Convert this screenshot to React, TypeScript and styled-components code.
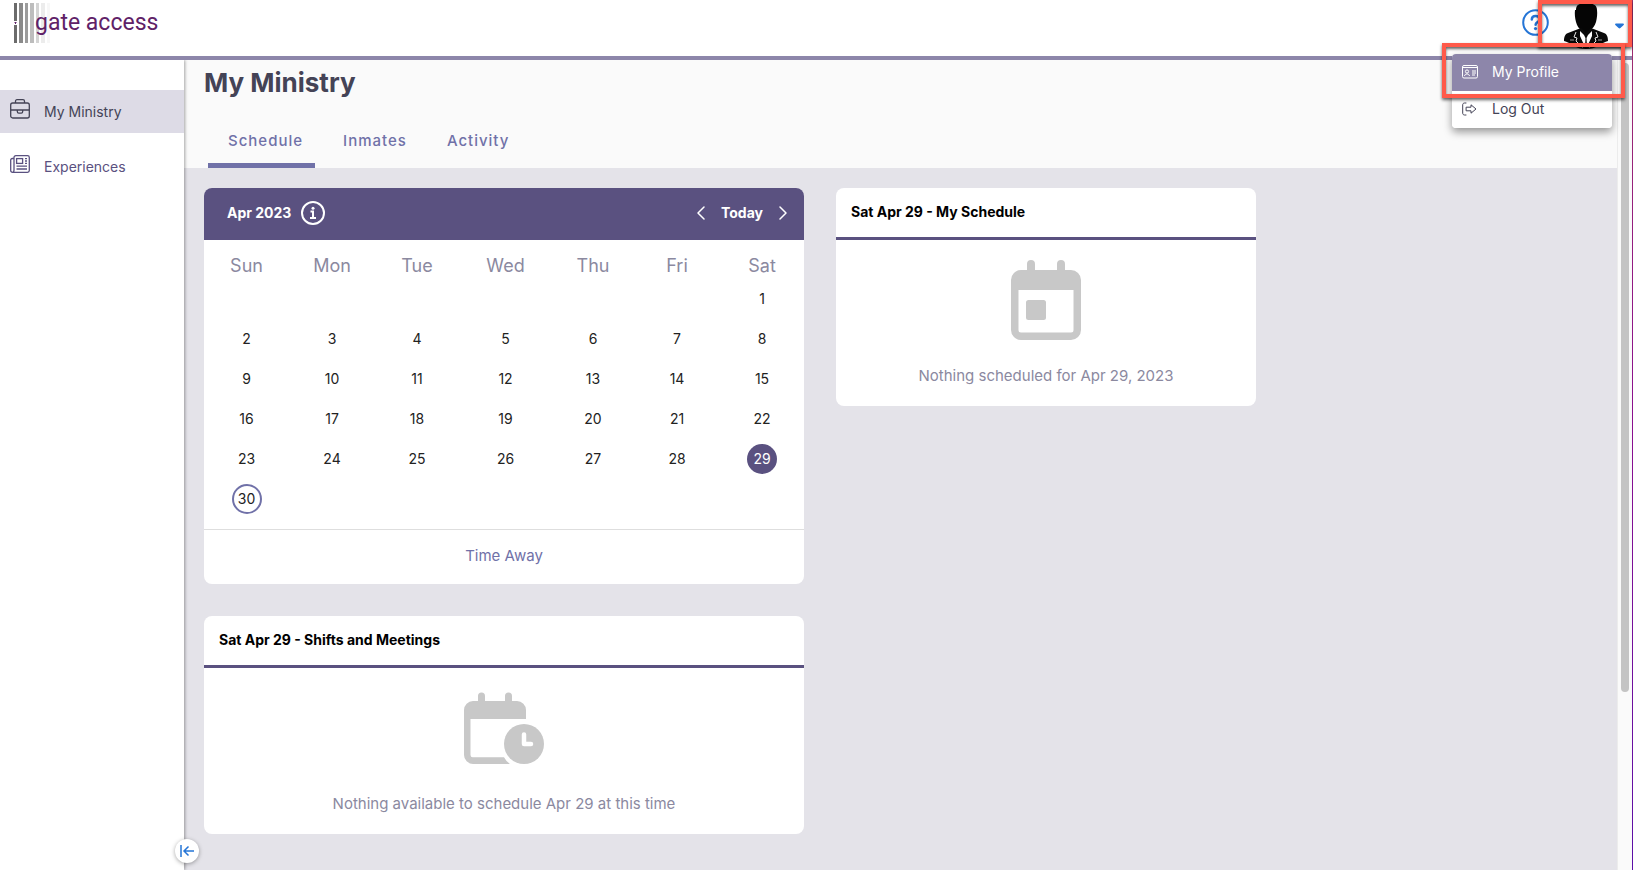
import React from "react";
import styled, { createGlobalStyle, css } from "styled-components";

const color = {
  plum: "#5a5180",
  lilac: "#8d86aa",
  violet: "#7071a8",
  link: "#2575d6",
  ink: "#444356",
  muted: "#8b899f",
  canvas: "#e4e3e9",
  panel: "#fafafa",
  selected: "#dddbe6",
  placeholder: "#c8c8c8",
  highlight: "#ff5a4a",
};

const GlobalStyle = createGlobalStyle`
  *, *::before, *::after { box-sizing: border-box; }
  body {
    margin: 0;
    background: #fff;
    color: ${color.ink};
    font: 14px/20px Inter, "Open Sans", sans-serif;
  }
  button { font: inherit; color: inherit; background: none; border: 0; padding: 0; cursor: pointer; }
  a { color: inherit; text-decoration: none; }
  svg { display: block; flex: none; }
`;

const Page = styled.div`
  position: relative;
  display: flex;
  flex-direction: column;
  min-height: 100vh;
  padding-right: 1px;
  background: linear-gradient(#a0306c, #8a1090 50%, #5c10a8) right / 1px 100% no-repeat;
`;

const TopBar = styled.header`
  position: relative;
  display: flex;
  align-items: flex-start;
  justify-content: space-between;
  height: 60px;
  padding: 3px 8px 0 14px;
  background: #fff;
  border-bottom: 4px solid ${color.lilac};
`;

const Logo = styled.a`
  display: flex;
  align-items: center;
  height: 40px;
`;

const LogoText = styled.span`
  margin-left: -15px;
  color: #5f2167;
  font: 23px/38px Roboto, sans-serif;
`;

const Tools = styled.div`
  display: flex;
  align-items: flex-start;
  gap: 14px;
`;

const HelpButton = styled.button`
  margin-top: 6px;
  color: ${color.link};
`;

const AccountButton = styled.button`
  display: flex;
  align-items: center;
  gap: 6px;
  color: ${color.link};
`;

const Menu = styled.div`
  position: absolute;
  z-index: 2;
  top: 54px;
  right: 20px;
  width: 160px;
  overflow: hidden;
  background: #fff;
  border-radius: 4px;
  box-shadow: 0 4px 8px rgba(0, 0, 0, 0.4);
`;

const MenuItem = styled.a<{ $active?: boolean }>`
  display: flex;
  align-items: center;
  gap: 14px;
  height: 37px;
  padding: 0 10px 2px;
  color: ${(p) => (p.$active ? "#fff" : color.ink)};
  background: ${(p) => (p.$active ? color.lilac : "#fff")};
`;

const callout = css`
  position: absolute;
  z-index: 3;
  border: 4px solid ${color.highlight};
  box-shadow: 0 2px 3px rgba(0, 0, 0, 0.6), inset 0 2px 3px rgba(0, 0, 0, 0.6);
  pointer-events: none;
`;

const AccountCallout = styled.div`
  ${callout}
  top: 0;
  right: 0;
  width: 94px;
  height: 47px;
`;

const ProfileCallout = styled.div`
  ${callout}
  top: 43px;
  right: 7px;
  width: 183px;
  height: 55px;
`;

const Body = styled.div`
  display: flex;
  flex: 1;
`;

const Sidebar = styled.nav`
  position: relative;
  z-index: 1;
  display: flex;
  flex: none;
  flex-direction: column;
  gap: 12px;
  width: 184px;
  padding-top: 30px;
  background: #fff;
  box-shadow: 1px 0 3px rgba(0, 0, 0, 0.35);
  clip-path: inset(0 -20px 0 0);
`;

const NavItem = styled.a<{ $active?: boolean }>`
  display: flex;
  align-items: center;
  gap: 14px;
  height: 43px;
  padding-left: 10px;
  color: ${(p) => (p.$active ? color.ink : color.plum)};
  background: ${(p) => (p.$active ? color.selected : "transparent")};

  svg { margin-bottom: 5px; }
`;

const CollapseButton = styled.button`
  position: absolute;
  right: -15px;
  bottom: 7px;
  display: grid;
  place-items: center;
  width: 24px;
  height: 24px;
  color: ${color.link};
  background: #fff;
  border-radius: 50%;
  box-shadow: 0 1px 4px rgba(0, 0, 0, 0.35);
`;

const Main = styled.main`
  flex: 1;
  min-width: 0;
  background: ${color.canvas};
`;

const PageHead = styled.div`
  padding: 7px 20px 0;
  background: ${color.panel};
`;

const Title = styled.h1`
  margin: 0 0 22px;
  font-size: 26px;
  line-height: 32px;
  font-weight: 700;
`;

const Tabs = styled.div`
  display: flex;
  gap: 8px;
  padding-left: 4px;
`;

const Tab = styled.button<{ $active?: boolean }>`
  padding: 10px 12px 12px 20px;
  color: ${color.violet};
  font-size: 15px;
  font-weight: 500;
  letter-spacing: 1px;
  border-bottom: 5px solid ${(p) => (p.$active ? color.violet : "transparent")};
`;

const Board = styled.div`
  display: grid;
  grid-template-columns: minmax(0, 600px) minmax(0, 420px);
  gap: 32px;
  padding: 20px;
`;

const Column = styled.div`
  display: flex;
  flex-direction: column;
  gap: 32px;
`;

const Card = styled.section`
  overflow: hidden;
  background: #fff;
  border-radius: 8px;
`;

const CardTitle = styled.h2`
  margin: 0;
  padding: 0 15px 2px;
  color: #000;
  font-size: 14px;
  line-height: 47px;
  font-weight: 700;
  border-bottom: 3px solid ${color.plum};
`;

const EmptyState = styled.div`
  display: flex;
  flex-direction: column;
  align-items: center;
  gap: 24px;
  padding: 20px 16px 18px;
  color: ${color.muted};
  font-size: 15px;
  line-height: 24px;
`;

const CalendarBar = styled.div`
  display: flex;
  align-items: center;
  justify-content: space-between;
  height: 52px;
  padding: 0 17px 2px 23px;
  color: #fff;
  font-weight: 700;
  background: ${color.plum};
`;

const BarGroup = styled.div<{ $gap: number }>`
  display: flex;
  align-items: center;
  gap: ${(p) => p.$gap}px;
`;

const MonthTable = styled.table`
  width: 100%;
  margin: 12px 0 10px;
  table-layout: fixed;
  border-collapse: collapse;

  th, td { padding: 0; text-align: center; }
  th { height: 27px; color: ${color.muted}; font-size: 18px; font-weight: 400; }
  td { height: 40px; color: #222; }
  th:nth-child(1) { width: 85px; }
  th:nth-child(2), th:nth-child(6) { width: 86px; }
  th:nth-child(3) { width: 84px; }
  th:nth-child(4) { width: 93px; }
  th:nth-child(5) { width: 82px; }
`;

const Day = styled.button<{ $selected?: boolean; $today?: boolean }>`
  width: 30px;
  height: 30px;
  border-radius: 50%;
  ${(p) => p.$selected && css`color: #fff; background: ${color.plum};`}
  ${(p) => p.$today && css`border: 2px solid ${color.violet};`}
`;

const CardFooter = styled.div`
  padding-bottom: 2px;
  color: ${color.violet};
  font-size: 15px;
  line-height: 52px;
  text-align: center;
  border-top: 1px solid #dedede;
`;

const ScrollTrack = styled.div`
  flex: none;
  width: 15px;
  padding: 3px 3px 0;
  background: ${color.panel};
  border-left: 1px solid #ececec;
`;

const ScrollThumb = styled.div`
  width: 8px;
  height: 78%;
  background: #c4c4c4;
  border-radius: 4px;
`;

const Barcode = () => (
  <svg width="36" height="40" viewBox="0 0 36 40">
    <rect width="3" height="40" fill="#6b6b6b" />
    <rect x="5" width="4" height="40" fill="#8a8a8a" />
    <rect x="11" width="3" height="40" fill="#9c9c9c" />
    <rect x="16" width="4" height="40" fill="#bdbdbd" />
    <rect x="22" width="3" height="40" fill="#d4d4d4" />
    <rect x="27" width="4" height="40" fill="#ececec" />
    <rect x="33" width="3" height="40" fill="#f7f7f7" />
    <rect y="18" width="3" height="4" fill="#fff" />
    <path d="M0 19h3l-1 1v1h-1v-1z" fill="#5f2167" />
  </svg>
);

const HelpIcon = () => (
  <svg width="27" height="27" viewBox="0 0 27 27" fill="none" stroke="currentColor">
    <circle cx="13.5" cy="13.5" r="12.3" strokeWidth="2" />
    <path d="M9.8 10.6c0-2.2 1.6-3.6 3.8-3.6s3.9 1.4 3.9 3.4c0 2.600-3.900 2.700-3.900 5.400" strokeWidth="2.500" strokeLinecap="round" />
    <circle cx="13.500" cy="19.600" r="1.600" fill="currentColor" stroke="none" />
  </svg>
);

const Avatar = () => (
  <svg width="46" height="46" viewBox="0 0 46 46">
    <path d="M13 7C13 2 16 0 23 0s11 2 11 7c.5 4 0 8-1 12-1 4-4 7-6 8v4h-8v-4c-3-1-5-4-6-8-1-4-1.500-8-1-12z" fill="#050505" />
    <path d="M18 25 5 30c-3 1-4 4-4 8 3 1 6 2 9 4 4 3 8 4 13 4s9-1 13-4c3-2 6-3 9-4 0-4-1-7-4-8l-13-5-5 5z" fill="#0a0a0a" />
    <path d="m17 28 0 5 5 11 .5-9L21 32zM29 28l0 5-5 11-.5-9L25 32z" fill="#fff" />
    <path d="m13 29-2 5 3 1-1 3 7 7M33 29l2 5-3 1 1 3-7 7" fill="none" stroke="#e8e8e8" />
    <path d="M7 37h4M35 37h4" stroke="#999" />
  </svg>
);

const Caret = () => (
  <svg width="9" height="6" viewBox="0 0 9 6" fill="currentColor">
    <path d="M1 .5h7c.9 0 1.200.8.7 1.400L5.400 5c-.5.500-1.300.5-1.800 0L.300 1.900C-.2 1.300.1.500 1 .5z" />
  </svg>
);

const IdCardIcon = () => (
  <svg width="16" height="14" viewBox="0 0 16 14" fill="none" stroke="currentColor">
    <rect x=".5" y=".5" width="15" height="12.500" rx="1.500" />
    <path d="M.5 2.500h15M10 6h4M10 8h4M10 10h3M2.500 11c.3-1.500 1.200-2 2.500-2s2.200.5 2.500 2" />
    <circle cx="5" cy="6.500" r="1.600" />
  </svg>
);

const LogOutIcon = () => (
  <svg width="16" height="14" viewBox="0 0 16 14" fill="none" stroke="currentColor" strokeLinejoin="round" strokeLinecap="round">
    <path d="M4 1H2.500C1.500 1 .7 1.700.7 2.700v8.600c0 1 .8 1.700 1.800 1.700H4" />
    <path d="M4.500 5.200H9V2.800L14 7 9 11.200V8.800H4.500z" />
  </svg>
);

const BriefcaseIcon = () => (
  <svg width="20" height="20" viewBox="0 0 20 20" fill="none" stroke="currentColor" strokeWidth="1.300">
    <rect x=".7" y="4" width="18.600" height="15" rx="2" />
    <path d="M5.500 4V2.200C5.500 1.300 6.100.7 7 .7h6c.9 0 1.500.6 1.500 1.500V4M.7 11h6.600M12.700 11h6.600M7.300 10.500v2c0 1 .6 1.600 1.500 1.600h2.400c.9 0 1.500-.6 1.500-1.600v-2M7.300 11h5.400" />
  </svg>
);

const NewspaperIcon = () => (
  <svg width="20" height="18" viewBox="0 0 20 18" fill="none" stroke="currentColor" strokeWidth="1.300">
    <path d="M4 15V2.500C4 1.400 4.800.7 5.800.7h11.700c1 0 1.800.7 1.800 1.800v13c0 1-.8 1.800-1.800 1.800H2.500c-1 0-1.800-.8-1.800-1.800V5c0-1 .6-1.500 1.600-1.500H4M4 15c0 1.300-.5 2.300-1.500 2.300" />
    <rect x="6.600" y="3.600" width="6" height="4.800" />
    <path d="M6.500 11.200h10.500M6.500 14h10.500M15 3.700h2M15 6h2M15 8.400h2" />
  </svg>
);

const InfoIcon = () => (
  <svg width="24" height="24" viewBox="0 0 24 24" fill="none" stroke="currentColor" strokeWidth="2">
    <circle cx="12" cy="12" r="11" />
    <path d="M9.500 10.500H12V17M9 17h6" />
    <circle cx="12" cy="7.300" r="1.500" fill="currentColor" stroke="none" />
  </svg>
);

const Chevron = ({ d }: { d: string }) => (
  <svg width="8" height="14" viewBox="0 0 8 14" fill="none" stroke="currentColor" strokeWidth="1.500" strokeLinecap="round" strokeLinejoin="round">
    <path d={d} />
  </svg>
);

const CollapseIcon = () => (
  <svg width="15" height="12" viewBox="0 0 15 12" fill="none" stroke="currentColor" strokeWidth="1.500">
    <path d="M1 0v12M14 6H5M8.500 1.500 4 6l4.500 4.500" />
  </svg>
);

const EventIcon = () => (
  <svg width="80" height="80" viewBox="0 0 80 80" fill={color.placeholder}>
    <path fillRule="evenodd" d="M15 10h6V4a4 4 0 0 1 8 0v6h22V4a4 4 0 0 1 8 0v6h6a10 10 0 0 1 10 10v50a10 10 0 0 1-10 10H15A10 10 0 0 1 5 70V20a10 10 0 0 1 10-10zM12.500 30v40a2.500 2.500 0 0 0 2.500 2.500h50a2.500 2.500 0 0 0 2.500-2.500V30z" />
    <rect x="20" y="40" width="20" height="20" rx="2.500" />
  </svg>
);

const EventClockIcon = () => (
  <svg width="80" height="80" viewBox="0 0 80 80" fill={color.placeholder}>
    <path d="M9 13h5V8a3.500 3.500 0 0 1 7 0v5h20V8a3.500 3.500 0 0 1 7 0v5h5a9 9 0 0 1 9 9v9H6.500v36a2.200 2.200 0 0 0 2.200 2.200H40q2 4 6 6.800H9a9 9 0 0 1-9-9V22a9 9 0 0 1 9-9z" />
    <circle cx="60" cy="56" r="20" />
    <path d="M60 46.500V56h7" fill="none" stroke="#fff" strokeWidth="4.500" strokeLinecap="round" strokeLinejoin="round" />
  </svg>
);

const WEEKDAYS = ["Sun", "Mon", "Tue", "Wed", "Thu", "Fri", "Sat"];
const FIRST_WEEKDAY = 6;
const DAYS_IN_MONTH = 30;
const WEEKS = Array.from({ length: 6 }, (_, week) =>
  WEEKDAYS.map((_, i) => {
    const day = week * 7 + i - FIRST_WEEKDAY + 1;
    return day > 0 && day <= DAYS_IN_MONTH ? day : null;
  })
);

function MonthCalendar() {
  return (
    <Card aria-label="Calendar">
      <CalendarBar>
        <BarGroup $gap={10}>
          Apr 2023
          <button aria-label="Calendar information"><InfoIcon /></button>
        </BarGroup>
        <BarGroup $gap={16}>
          <button aria-label="Previous month"><Chevron d="M7 1 1 7l6 6" /></button>
          <button>Today</button>
          <button aria-label="Next month"><Chevron d="m1 1 6 6-6 6" /></button>
        </BarGroup>
      </CalendarBar>
      <MonthTable>
        <thead>
          <tr>{WEEKDAYS.map((name) => <th key={name} scope="col">{name}</th>)}</tr>
        </thead>
        <tbody>
          {WEEKS.map((week, w) => (
            <tr key={w}>
              {week.map((day, i) => (
                <td key={i}>
                  {day && <Day $selected={day === 29} $today={day === 30}>{day}</Day>}
                </td>
              ))}
            </tr>
          ))}
        </tbody>
      </MonthTable>
      <CardFooter><a href="#time-away">Time Away</a></CardFooter>
    </Card>
  );
}

export default function App() {
  return (
    <Page>
      <GlobalStyle />
      <TopBar>
        <Logo href="#home">
          <Barcode />
          <LogoText>gate access</LogoText>
        </Logo>
        <Tools>
          <HelpButton aria-label="Help"><HelpIcon /></HelpButton>
          <AccountButton aria-label="Account menu"><Avatar /><Caret /></AccountButton>
        </Tools>
        <Menu>
          <MenuItem href="#profile" $active><IdCardIcon />My Profile</MenuItem>
          <MenuItem href="#logout"><LogOutIcon />Log Out</MenuItem>
        </Menu>
        <AccountCallout />
        <ProfileCallout />
      </TopBar>
      <Body>
        <Sidebar>
          <NavItem href="#ministry" $active><BriefcaseIcon />My Ministry</NavItem>
          <NavItem href="#experiences"><NewspaperIcon />Experiences</NavItem>
          <CollapseButton aria-label="Collapse sidebar"><CollapseIcon /></CollapseButton>
        </Sidebar>
        <Main>
          <PageHead>
            <Title>My Ministry</Title>
            <Tabs>
              <Tab $active>Schedule</Tab>
              <Tab>Inmates</Tab>
              <Tab>Activity</Tab>
            </Tabs>
          </PageHead>
          <Board>
            <Column>
              <MonthCalendar />
              <Card>
                <CardTitle>Sat Apr 29 - Shifts and Meetings</CardTitle>
                <EmptyState><EventClockIcon />Nothing available to schedule Apr 29 at this time</EmptyState>
              </Card>
            </Column>
            <Column>
              <Card>
                <CardTitle>Sat Apr 29 - My Schedule</CardTitle>
                <EmptyState><EventIcon />Nothing scheduled for Apr 29, 2023</EmptyState>
              </Card>
            </Column>
          </Board>
        </Main>
        <ScrollTrack><ScrollThumb /></ScrollTrack>
      </Body>
    </Page>
  );
}
